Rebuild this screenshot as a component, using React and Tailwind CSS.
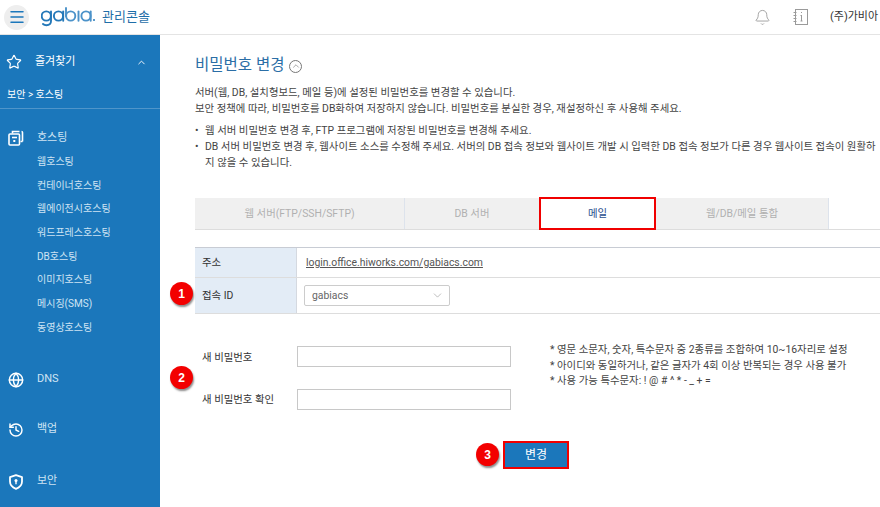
import React from "react";
import { Bell, ChevronDown, ChevronUp, Globe, History, Menu, Star } from "lucide-react";

const hostingItems = ["웹호스팅", "컨테이너호스팅", "웹에이전시호스팅", "워드프레스호스팅", "DB호스팅", "이미지호스팅", "메시징(SMS)", "동영상호스팅"];

function Badge({ n, className }) {
  return (
    <span className={`absolute flex h-[23px] w-[23px] items-center justify-center rounded-full bg-[#f30000] font-['Liberation_Sans',sans-serif] text-[12px] font-bold text-white shadow-[1px_2px_2px_rgba(0,0,0,0.45)] ${className}`}>
      {n}
    </span>
  );
}

function HostingIcon() {
  return (
    <svg width="16" height="16" viewBox="0 0 16 16" fill="none" stroke="currentColor" strokeWidth="1.6">
      <rect x="1" y="4" width="10.5" height="11" rx="1" />
      <path d="M4.5 3.5V1.5h7M14.5 11.5V2.5a1 1 0 0 0-1-1M14.5 11.5h-2" />
      <path d="M4 7.5h5" />
      <rect x="5.3" y="10" width="2" height="2" fill="currentColor" stroke="none" />
    </svg>
  );
}

function ShieldIcon() {
  return (
    <svg width="16" height="16" viewBox="0 0 16 16" fill="none" stroke="currentColor" strokeWidth="1.8">
      <path d="M8 1.2 14 3.2v4.3c0 3.4-2.5 6-6 7.3-3.5-1.3-6-3.9-6-7.3V3.2z" strokeLinejoin="round" />
      <circle cx="8" cy="6.6" r="1.5" fill="currentColor" stroke="none" />
      <path d="M8 7v3.2" strokeWidth="1.4" />
    </svg>
  );
}

function GabiaLogo() {
  return (
    <svg width="54" height="22" viewBox="0 0 54 22" className="-mt-[2px] ml-[12px]" fill="none" stroke="#2478b8" strokeWidth="1.9" strokeLinecap="round">
      <circle cx="5.3" cy="11" r="4.6" />
      <path d="M10 6.5V16c0 2.8-2 4.2-4.6 4.2-1.4 0-2.6-.4-3.4-1.2" />
      <circle cx="17.5" cy="11" r="4.6" />
      <path d="M22.2 6.5v9.3" />
      <g stroke="#4b92c9">
        <path d="M25 3v8" />
        <circle cx="29.7" cy="11" r="4.6" />
        <path d="M37.5 6.5v9.3" />
        <circle cx="45" cy="11" r="4.6" />
        <path d="M49.7 6.5v9.3" />
      </g>
      <circle cx="53" cy="15" r="1" fill="#2478b8" stroke="none" />
    </svg>
  );
}

function SideItem({ icon, label, className }) {
  return (
    <div className={`flex items-center text-[11px] text-[#cfe4f3] ${className}`}>
      <span className="ml-2 mr-[13px] flex w-[16px] justify-center text-white">{icon}</span>
      <span>{label}</span>
    </div>
  );
}

export default function App() {
  return (
    <div className="flex h-[507px] w-[880px] flex-col overflow-hidden bg-white font-['Roboto','Noto_Sans_CJK_KR',sans-serif] text-[10.4px] text-[#444]">
      <header className="flex h-[35px] shrink-0 items-center border-b border-[#e4e4e4] pl-1">
        <div className="flex h-[25px] w-[25px] items-center justify-center rounded-full bg-[#eeeeee] text-[#1b77bb]">
          <Menu size={18} strokeWidth={2} />
        </div>
        <GabiaLogo />
        <span className="ml-[7px] text-[13px] text-[#1f6ea8]">관리콘솔</span>
        <div className="ml-auto flex items-center">
          <Bell size={17} strokeWidth={1.25} className="text-[#9a9a9a]" />
          <svg width="16" height="18" viewBox="0 0 16 18" className="ml-[22px] text-[#9a9a9a]" fill="none" stroke="currentColor">
            <rect x="2.5" y="1.5" width="12" height="15" />
            <path d="M0.5 4.5h3M0.5 7.5h3M0.5 10.5h3M0.5 13.5h3M8.5 7v6M7.5 7.5h1M7.5 13h2M8.5 4v1" />
          </svg>
          <span className="ml-[21px] w-[50px] whitespace-nowrap text-[11px] text-[#333]">(주)가비아</span>
        </div>
      </header>

      <div className="flex min-h-0 flex-1">
        <aside className="w-[160px] shrink-0 bg-[#1b77bb] text-white">
          <div className="flex h-[51px] items-center pl-[6px] pt-[3px]">
            <Star size={16} strokeWidth={1.75} />
            <span className="ml-[13px] text-[11px]">즐겨찾기</span>
            <ChevronUp size={11} strokeWidth={2} className="ml-[61px]" />
          </div>
          <div className="h-[23px] border-b border-[#4f95ca] pl-[7px] text-[10px] leading-[18px]">보안 &gt; 호스팅</div>
          <div className="pt-[17px]">
            <SideItem icon={<HostingIcon />} label="호스팅" className="h-[24px]" />
            {hostingItems.map((item) => (
              <div key={item} className="h-[23.7px] whitespace-nowrap pl-[37px] text-[10px] leading-[23px] text-[#cfe4f3]">{item}</div>
            ))}
            <SideItem icon={<Globe size={16} strokeWidth={2.2} />} label="DNS" className="mt-[28px] h-[24px]" />
            <SideItem icon={<History size={16} strokeWidth={2.2} />} label="백업" className="mt-[26px] h-[24px]" />
            <SideItem icon={<ShieldIcon />} label="보안" className="mt-[28px] h-[24px]" />
          </div>
        </aside>

        <main className="relative min-w-0 flex-1 pl-[35px]">
          <h1 className="mt-[19px] flex h-[24px] items-center whitespace-nowrap text-[15.5px] text-[#2b6ea6]">
            비밀번호 변경
            <span className="ml-[5px] flex h-[13px] w-[13px] items-center justify-center rounded-full border border-[#777] text-[#777]">
              <ChevronUp size={10} strokeWidth={1.5} />
            </span>
          </h1>
          <div className="mt-[7px] whitespace-nowrap leading-[16px]">
            <p>서버(웹, DB, 설치형보드, 메일 등)에 설정된 비밀번호를 변경할 수 있습니다.</p>
            <p>보안 정책에 따라, 비밀번호를 DB화하여 저장하지 않습니다. 비밀번호를 분실한 경우, 재설정하신 후 사용해 주세요.</p>
          </div>
          <ul className="mt-[6px] whitespace-nowrap leading-[15.75px]">
            <li className="flex"><span className="w-[10px] shrink-0">•</span>웹 서버 비밀번호 변경 후, FTP 프로그램에 저장된 비밀번호를 변경해 주세요.</li>
            <li className="flex"><span className="w-[10px] shrink-0">•</span>DB 서버 비밀번호 변경 후, 웹사이트 소스를 수정해 주세요. 서버의 DB 접속 정보와 웹사이트 개발 시 입력한 DB 접속 정보가 다른 경우 웹사이트 접속이 원활하</li>
            <li className="pl-[10px]">지 않을 수 있습니다.</li>
          </ul>

          <div className="mt-[28px] flex h-[32px] w-[685px] items-stretch border-b border-[#dddddd] text-[#b0b0b0]">
            <div className="flex w-[210px] items-center justify-center border-r border-[#dde3ec] bg-[#f0f0f0]">웹 서버(FTP/SSH/SFTP)</div>
            <div className="flex w-[134px] items-center justify-center bg-[#f0f0f0]">DB 서버</div>
            <div className="z-10 -mt-px flex h-[33px] w-[117px] items-center justify-center border-2 border-[#f00000] bg-white text-[#2a4f8f]">메일</div>
            <div className="flex w-[173px] items-center justify-center border-r border-[#dde3ec] bg-[#f0f0f0]">웹/DB/메일 통합</div>
            <div className="flex-1 bg-white" />
          </div>

          <div className="mt-[17px] w-[685px] border-b border-t border-b-[#dddddd] border-t-[#c8ccd4]">
            <div className="flex h-[30px] border-b border-[#dddddd]">
              <div className="flex w-[102px] items-center border-r border-[#d5d9e0] bg-[#e3ecf6] pl-[7px] text-[#333]">주소</div>
              <div className="flex items-center pl-[9px] text-[#555] underline">login.office.hiworks.com/gabiacs.com</div>
            </div>
            <div className="flex h-[35px]">
              <div className="flex w-[102px] items-center border-r border-[#d5d9e0] bg-[#e3ecf6] pl-[7px] text-[#333]">접속 ID</div>
              <div className="flex items-center pl-[7px]">
                <div className="flex h-[21px] w-[146px] items-center justify-between rounded-[2px] border border-[#cccccc] pl-[7px] pr-[5px] text-[#666]">
                  gabiacs
                  <ChevronDown size={13} strokeWidth={1} className="text-[#888]" />
                </div>
              </div>
            </div>
          </div>

          <div className="mt-[32px] flex h-[64px] whitespace-nowrap">
            <div className="flex w-[102px] flex-col justify-between pb-[2px] pl-[7px] pt-[4px] text-[#333]">
              <span className="leading-[16px]">새 비밀번호</span>
              <span className="leading-[16px]">새 비밀번호 확인</span>
            </div>
            <div className="flex w-[214px] flex-col justify-between">
              <div className="h-[21px] border border-[#c8c8c8] bg-white" />
              <div className="h-[21px] border border-[#c8c8c8] bg-white" />
            </div>
            <div className="-mt-[4px] ml-[39px] leading-[15.5px]">
              <p>* 영문 소문자, 숫자, 특수문자 중 2종류를 조합하여 10~16자리로 설정</p>
              <p>* 아이디와 동일하거나, 같은 글자가 4회 이상 반복되는 경우 사용 불가</p>
              <p>* 사용 가능 특수문자: ! @ # ^ * - _ + =</p>
            </div>
          </div>

          <div className="ml-[308px] mt-[31px] flex h-[28px] w-[66px] items-center justify-center border-2 border-[#f00000] bg-[#1b77bb] text-[12px] text-white">변경</div>

          <Badge n="1" className="left-[10px] top-[247px]" />
          <Badge n="2" className="left-[10px] top-[331px]" />
          <Badge n="3" className="left-[316px] top-[408px]" />
        </main>
      </div>
    </div>
  );
}
